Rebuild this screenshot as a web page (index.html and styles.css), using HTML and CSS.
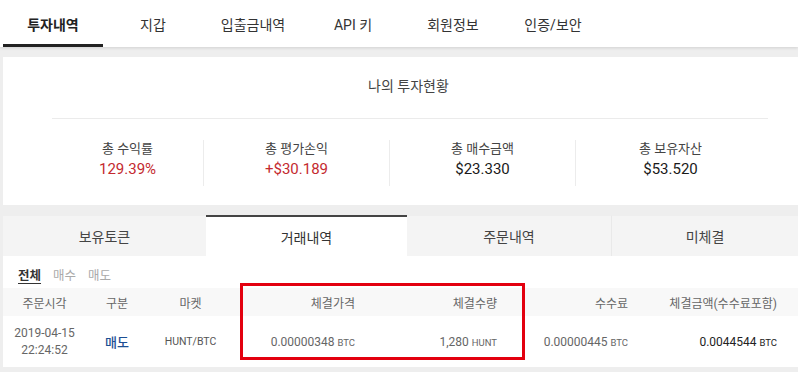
FILE: index.html
```html
<!DOCTYPE html>
<html lang="ko">
<head>
<meta charset="utf-8">
<link rel="stylesheet" href="styles.css">
</head>
<body>
<nav class="topnav">
  <a class="topnav__item is-active">투자내역</a>
  <a class="topnav__item">지갑</a>
  <a class="topnav__item">입출금내역</a>
  <a class="topnav__item">API 키</a>
  <a class="topnav__item">회원정보</a>
  <a class="topnav__item">인증/보안</a>
</nav>

<section class="summary">
  <h2 class="summary__title">나의 투자현황</h2>
  <div class="summary__divider"></div>
  <div class="stats">
    <div class="stat stat--first">
      <div class="stat__label">총 수익률</div>
      <div class="stat__value stat__value--up">129.39%</div>
    </div>
    <div class="stat">
      <div class="stat__label">총 평가손익</div>
      <div class="stat__value stat__value--up">+$30.189</div>
    </div>
    <div class="stat">
      <div class="stat__label">총 매수금액</div>
      <div class="stat__value">$23.330</div>
    </div>
    <div class="stat stat--last">
      <div class="stat__label">총 보유자산</div>
      <div class="stat__value">$53.520</div>
    </div>
  </div>
</section>

<section class="trades">
  <div class="tabs">
    <a class="tab tab--1">보유토큰</a>
    <a class="tab tab--2 is-active">거래내역</a>
    <a class="tab tab--3">주문내역</a>
    <a class="tab tab--4">미체결</a>
  </div>
  <div class="filter">
    <a class="filter__item is-active">전체</a>
    <a class="filter__item">매수</a>
    <a class="filter__item">매도</a>
  </div>
  <table class="grid">
    <colgroup>
      <col class="c1"><col class="c2"><col class="c3"><col class="c4"><col class="c5"><col class="c6"><col class="c7">
    </colgroup>
    <thead>
      <tr>
        <th class="center">주문시각</th>
        <th class="center">구분</th>
        <th class="center">마켓</th>
        <th class="right">체결가격</th>
        <th class="right">체결수량</th>
        <th class="right">수수료</th>
        <th class="right last">체결금액(수수료포함)</th>
      </tr>
    </thead>
    <tbody>
      <tr>
        <td class="center date">2019-04-15<br>22:24:52</td>
        <td class="center side">매도</td>
        <td class="center market">HUNT/BTC</td>
        <td class="right num">0.00000348 <span class="unit">BTC</span></td>
        <td class="right num">1,280 <span class="unit">HUNT</span></td>
        <td class="right num">0.00000445 <span class="unit">BTC</span></td>
        <td class="right num strong last">0.0044544 <span class="unit">BTC</span></td>
      </tr>
    </tbody>
  </table>
  <div class="highlight"></div>
</section>
</body>
</html>
```

FILE: styles.css
```css
html { overflow: hidden; }
body {
  margin: 0;
  background: #eeeeee;
  font-family: Roboto, "Noto Sans CJK KR", sans-serif;
  color: #333;
  width: 798px;
  height: 372px;
}

.topnav {
  display: flex;
  height: 47px;
  background: #fff;
  padding-left: 3px;
  box-shadow: 0 1px 3px rgba(0,0,0,0.12);
  position: relative;
}
.topnav__item {
  width: 100px;
  display: flex;
  align-items: center;
  justify-content: center;
  font-size: 14px;
  color: #333;
  box-sizing: border-box;
  border-bottom: 3px solid transparent;
  padding-top: 3px;
}
.topnav__item.is-active {
  font-weight: 700;
  color: #222;
  border-bottom-color: #222;
}

.summary {
  margin: 10px 0 0 3px;
  width: 811px;
  background: #fff;
  padding: 19px 0 19px;
  box-sizing: border-box;
}
.summary__title {
  margin: 0;
  font-size: 14px;
  font-weight: 400;
  line-height: 20px;
  text-align: center;
  color: #444;
}
.summary__divider {
  height: 1px;
  background: #ebebeb;
  margin: 22px 46px 0 49px;
}
.stats {
  display: grid;
  grid-template-columns: 151px 186px 186px 190px;
  margin: 21px 0 0 49px;
}
.stat {
  text-align: center;
  height: 46px;
  border-left: 1px solid #ececec;
}
.stat--first { border-left: 0; }
.stat__label {
  font-size: 13px;
  line-height: 18px;
  color: #444;
}
.stat__value {
  font-size: 15px;
  line-height: 22px;
  color: #1a1a1a;
  font-weight: 400;
}
.stat__value--up { color: #c42a2f; }

.trades {
  position: relative;
  margin: 10px 0 0 3px;
  width: 795px;
  height: 152px;
  background: #fff;
}
.tabs {
  display: flex;
  height: 41px;
}
.tab {
  display: flex;
  align-items: center;
  justify-content: center;
  font-size: 14px;
  color: #444;
  background: #f4f4f4;
  box-sizing: border-box;
  border-top: 1px solid #eeeeee;
}
.tab--1 { width: 203px; }
.tab--2 { width: 201px; }
.tab--3 { width: 205px; border-right: 1px solid #e9e9e9; }
.tab--4 { flex: 1; }
.tab.is-active {
  background: #fff;
  border-top: 2px solid #444;
  color: #333;
}

.filter {
  display: flex;
  gap: 12px;
  padding: 11px 0 4px 15px;
  height: 32px;
  box-sizing: border-box;
}
.filter__item {
  font-size: 12.5px;
  line-height: 17px;
  color: #aaa;
}
.filter__item.is-active {
  color: #333;
  font-weight: 700;
  text-decoration: underline;
  text-underline-offset: 3px;
}

.grid {
  width: 795px;
  border-collapse: collapse;
  table-layout: fixed;
}
.c1 { width: 83px; }
.c2 { width: 62px; }
.c3 { width: 85px; }
.c4 { width: 132px; }
.c5 { width: 142px; }
.c6 { width: 131px; }
.c7 { width: 160px; }
.grid th {
  height: 28px;
  padding: 0 10px 0 0;
  background: #f8f8f8;
  font-size: 12px;
  font-weight: 400;
  color: #666;
}
.grid td {
  height: 51px;
  padding: 0 10px 0 0;
  font-size: 12px;
  color: #666;
  border-bottom: 1px solid #eee;
}
.grid .center { text-align: center; padding-right: 0; }
.grid .right { text-align: right; }
.grid .last { padding-right: 21px; }
.grid .date { line-height: 17px; color: #666; }
.grid .side { color: #1c4f93; font-size: 13px; font-weight: 500; }
.grid .market { font-size: 10.5px; color: #555; }
.grid .num { color: #666; }
.grid .strong { color: #222; }
.unit { font-size: 9.5px; }

.highlight {
  position: absolute;
  left: 237px;
  top: 68px;
  width: 285px;
  height: 77px;
  box-sizing: border-box;
  border: 3px solid #e3000f;
  pointer-events: none;
}
```
